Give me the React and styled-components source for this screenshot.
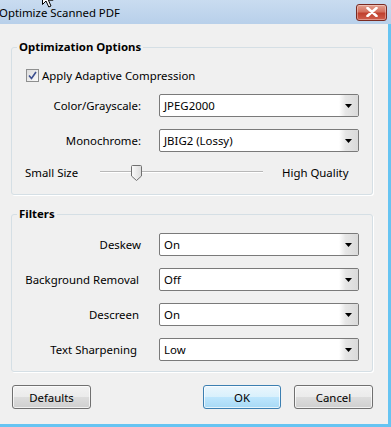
import React from 'react'
import styled, { createGlobalStyle } from 'styled-components'

const GlobalStyle = createGlobalStyle`
  html, body {
    margin: 0;
    padding: 0;
    background: #f0f0f0;
  }
  body {
    font-family: "Noto Sans", "Open Sans", sans-serif;
    font-size: 11.4px;
    color: #000;
  }
`

const Select = ({ value }) => (
  <SelectBox>
    <SelectValue>{value}</SelectValue>
    <SelectArrow>
      <svg width="7" height="4" viewBox="0 0 7 4">
        <path d="M0 0 H7 L3.5 4 Z" fill="#000" />
      </svg>
    </SelectArrow>
  </SelectBox>
)

const App = () => {
  return (
    <>
      <GlobalStyle />
      <Window>
        <Cursor width="12" height="19" viewBox="0 0 12 19">
          <path d="M0.5 0.5 L0.5 15.5 L4 12 L6.8 18 L9 17 L6.4 11.2 L11 11.2 Z" fill="#fff" stroke="#000" strokeWidth="1" />
        </Cursor>
        <TitleBar>
          <Title>Optimize Scanned PDF</Title>
          <CloseButton>
            <svg width="12" height="10" viewBox="0 0 12 10">
              <path d="M1.5 1 L10.5 9 M10.5 1 L1.5 9" stroke="#fff" strokeWidth="2.6" strokeLinecap="round" />
            </svg>
          </CloseButton>
        </TitleBar>
        <Body>
          <Group>
            <Legend>Optimization Options</Legend>
            <CheckRow>
              <CheckBox>
                <svg width="9" height="9" viewBox="0 0 9 9">
                  <path d="M1 4.5 L3.5 7.5 L8 1" fill="none" stroke="#3c4f8f" strokeWidth="1.6" />
                </svg>
              </CheckBox>
              Apply Adaptive Compression
            </CheckRow>
            <FieldRow $first>
              <FieldLabel>Color/Grayscale:</FieldLabel>
              <Select value="JPEG2000" />
            </FieldRow>
            <FieldRow>
              <FieldLabel>Monochrome:</FieldLabel>
              <Select value="JBIG2 (Lossy)" />
            </FieldRow>
            <SliderRow>
              <span>Small Size</span>
              <Track>
                <Thumb width="11" height="16" viewBox="0 0 11 16">
                  <defs>
                    <linearGradient id="thumbFill" x1="0" y1="0" x2="1" y2="0">
                      <stop offset="0" stopColor="#fbfbfb" />
                      <stop offset="1" stopColor="#dcdcdc" />
                    </linearGradient>
                  </defs>
                  <path d="M1.5 0.5 H9.5 Q10.5 0.5 10.5 1.5 V11 L5.5 15.5 L0.5 11 V1.5 Q0.5 0.5 1.5 0.5 Z" fill="url(#thumbFill)" stroke="#707070" />
                </Thumb>
              </Track>
              <SliderEnd>High Quality</SliderEnd>
            </SliderRow>
          </Group>

          <Group $second>
            <Legend>Filters</Legend>
            <FieldRow $first>
              <FieldLabel $inset={0}>Deskew</FieldLabel>
              <Select value="On" />
            </FieldRow>
            <FieldRow>
              <FieldLabel $inset={2}>Background Removal</FieldLabel>
              <Select value="Off" />
            </FieldRow>
            <FieldRow>
              <FieldLabel $inset={2}>Descreen</FieldLabel>
              <Select value="On" />
            </FieldRow>
            <FieldRow>
              <FieldLabel $inset={4}>Text Sharpening</FieldLabel>
              <Select value="Low" />
            </FieldRow>
          </Group>

          <ButtonRow>
            <Button>Defaults</Button>
            <ButtonGroup>
              <Button $primary>OK</Button>
              <Button>Cancel</Button>
            </ButtonGroup>
          </ButtonRow>
        </Body>
      </Window>
    </>
  )
}

const Window = styled.div`
  position: relative;
  width: 391px;
  height: 427px;
  display: flex;
  flex-direction: column;
  overflow: hidden;
`

const Cursor = styled.svg`
  position: absolute;
  left: 42px;
  top: -11px;
  z-index: 2;
`

const TitleBar = styled.div`
  flex: none;
  height: 24px;
  display: flex;
  align-items: center;
  justify-content: space-between;
  padding-right: 4px;
  background: linear-gradient(#c9dcf0, #b8d0ea);
`

const Title = styled.div`
  font-size: 11.4px;
  margin-left: -1px;
  color: #000;
`

const CloseButton = styled.div`
  width: 29px;
  height: 15px;
  display: flex;
  align-items: center;
  justify-content: center;
  border: 1px solid #7a2a22;
  border-radius: 3px;
  background: linear-gradient(#e3a090 0%, #d4705e 45%, #c0402e 55%, #d0604e 100%);
  box-shadow: inset 0 0 0 1px rgba(255, 255, 255, 0.35);
`

const Body = styled.div`
  flex: 1;
  display: flex;
  flex-direction: column;
  background: #f0f0f0;
  border-right: 3px solid #66c4f2;
  border-bottom: 3px solid #66c4f2;
  padding: 15px 15px 0 11px;
`

const Group = styled.fieldset`
  margin: ${p => (p.$second ? '11px' : '0')} 0 0 0;
  min-width: 0;
  padding: 0 13px ${p => (p.$second ? '10px' : '12px')} 0;
  border: 1px solid #d5dfe5;
  border-radius: 3px;
  box-shadow: 1px 1px 0 #fff;
`

const Legend = styled.legend`
  margin-left: 5px;
  padding: 0 2px;
  font-weight: bold;
  line-height: 16px;
`

const CheckRow = styled.div`
  display: flex;
  align-items: center;
  gap: 3px;
  height: 16px;
  margin-top: 12px;
  padding-left: 14px;
`

const CheckBox = styled.span`
  width: 11px;
  height: 11px;
  display: flex;
  align-items: center;
  justify-content: center;
  border: 1px solid #8e8f8f;
  background: linear-gradient(135deg, #dcdcdc, #fbfbfb);
`

const FieldRow = styled.div`
  display: grid;
  grid-template-columns: 129px 200px;
  column-gap: 18px;
  align-items: center;
  margin-top: ${p => (p.$first ? '11px' : '12px')};
`

const FieldLabel = styled.span`
  text-align: right;
  white-space: nowrap;
  padding-right: ${p => p.$inset || 0}px;
`

const SelectBox = styled.div`
  height: 21px;
  display: flex;
  align-items: stretch;
  border: 1px solid #7a7a7a;
  border-radius: 2px;
  background: #fff;
  box-shadow: inset 0 0 0 1px #fff;
  overflow: hidden;
`

const SelectValue = styled.span`
  flex: 1;
  display: flex;
  align-items: center;
  padding-left: 4px;
`

const SelectArrow = styled.span`
  width: 19px;
  display: flex;
  align-items: center;
  justify-content: center;
  background: linear-gradient(to right, #fff, #e6e6e6 35%, #dadada);
`

const SliderRow = styled.div`
  display: grid;
  grid-template-columns: 75px 163px auto;
  align-items: center;
  height: 20px;
  margin-top: 10px;
  padding-left: 13px;
`

const Track = styled.div`
  position: relative;
  height: 1px;
  background: #b8b8b8;
  border-bottom: 1px solid #fff;
`

const SliderEnd = styled.span`
  margin-left: 19px;
`

const Thumb = styled.svg`
  position: absolute;
  left: 31px;
  top: -6px;
`

const ButtonRow = styled.div`
  display: flex;
  justify-content: space-between;
  margin-top: 13px;
  padding: 0 0 0 1px;
`

const ButtonGroup = styled.div`
  display: flex;
  gap: 13px;
`

const Button = styled.div`
  width: ${p => (p.$primary ? '76px' : '77px')};
  height: 22px;
  display: flex;
  align-items: center;
  justify-content: center;
  border: 1px solid ${p => (p.$primary ? '#3c7fb1' : '#707070')};
  border-radius: 3px;
  background: ${p => (p.$primary
    ? 'linear-gradient(#eaf6fd 0%, #d9f0fc 50%, #bee6fd 50%, #a7d9f5 100%)'
    : 'linear-gradient(#f2f2f2 0%, #ebebeb 50%, #dddddd 50%, #cfcfcf 100%)')};
  box-shadow: inset 0 0 0 1px rgba(255, 255, 255, 0.7);
`

export default App
